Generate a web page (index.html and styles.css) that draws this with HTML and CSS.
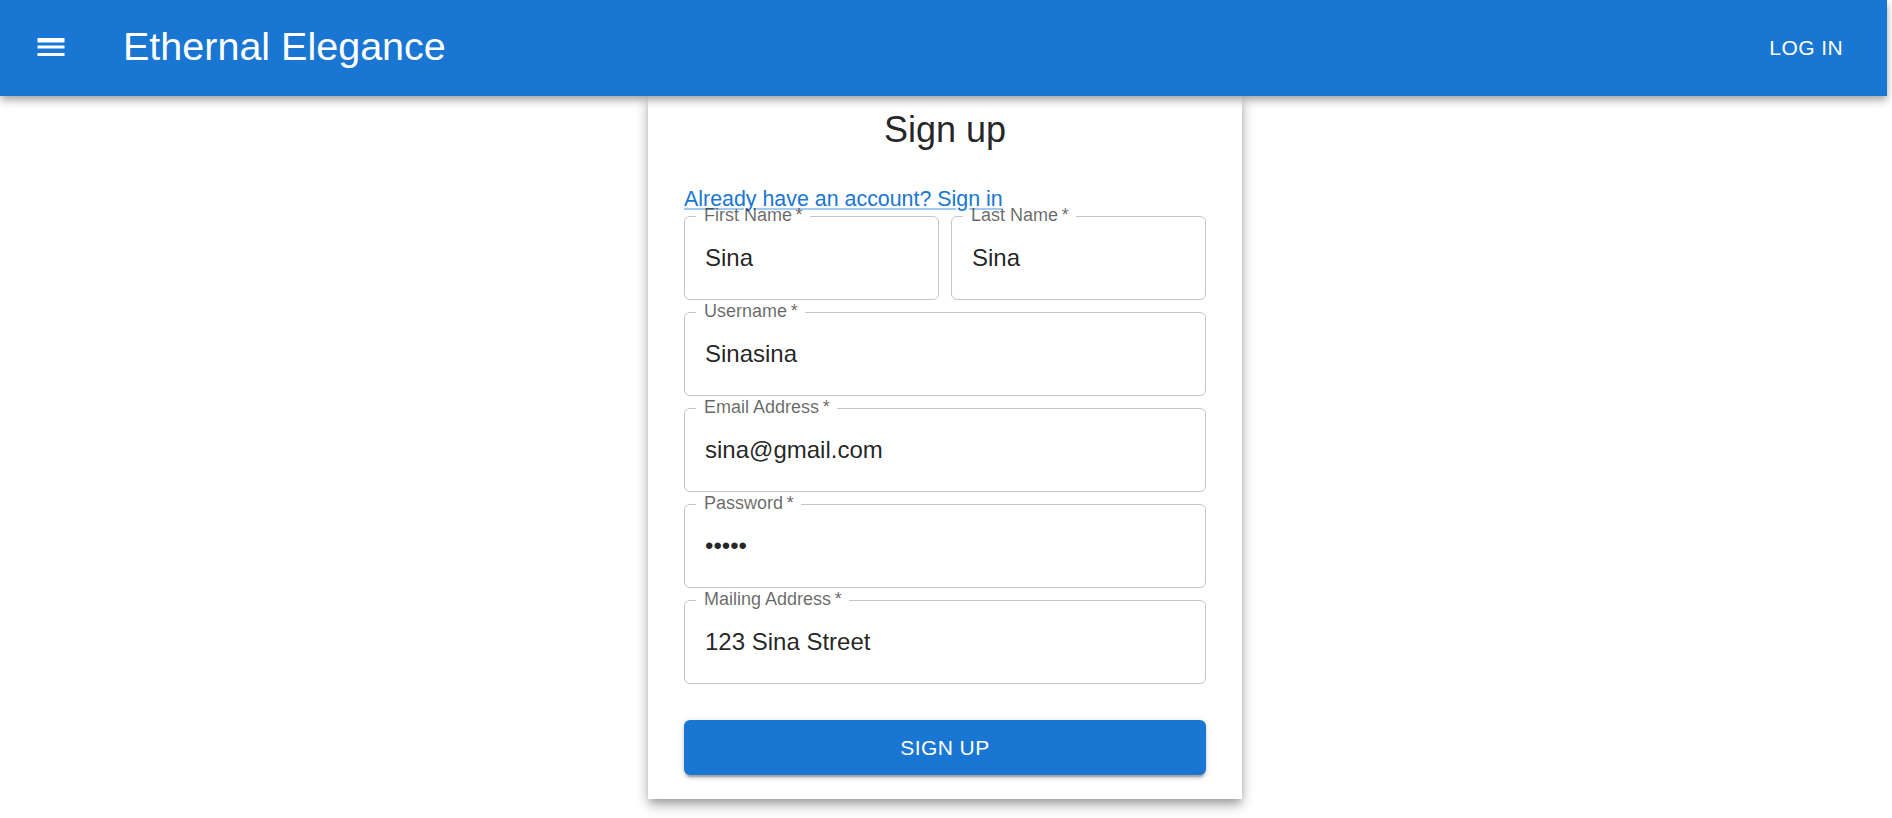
FILE: index.html
```html
<!DOCTYPE html>
<html lang="en">
<head>
<meta charset="utf-8">
<title>Sign up - Ethernal Elegance</title>
<link rel="stylesheet" href="styles.css">
</head>
<body>
<header class="appbar">
  <div class="toolbar">
    <button class="menu-btn" type="button" aria-label="menu">
      <svg viewBox="0 0 24 24" width="36" height="36" aria-hidden="true"><path d="M3 18h18v-2H3v2zm0-5h18v-2H3v2zm0-6v2h18V6H3z" fill="#fff"/></svg>
    </button>
    <h1 class="brand">Ethernal Elegance</h1>
    <span class="spacer"></span>
    <button class="login" type="button">LOG IN</button>
  </div>
</header>
<main class="page">
  <section class="card">
    <h2 class="title">Sign up</h2>
    <a class="signin-link" href="#">Already have an account? Sign in</a>
    <form class="form-grid">
      <fieldset class="field"><legend>First Name&thinsp;*</legend><input type="text" value="Sina"></fieldset>
      <fieldset class="field"><legend>Last Name&thinsp;*</legend><input type="text" value="Sina"></fieldset>
      <fieldset class="field wide"><legend>Username&thinsp;*</legend><input type="text" value="Sinasina"></fieldset>
      <fieldset class="field wide"><legend>Email Address&thinsp;*</legend><input type="email" value="sina@gmail.com"></fieldset>
      <fieldset class="field wide"><legend>Password&thinsp;*</legend><input type="password" value="sina1"></fieldset>
      <fieldset class="field wide"><legend>Mailing Address&thinsp;*</legend><input type="text" value="123 Sina Street"></fieldset>
      <button class="submit wide" type="button">SIGN UP</button>
    </form>
  </section>
</main>
</body>
</html>
```

FILE: styles.css
```css
* { box-sizing: border-box; }

html, body {
  margin: 0;
  padding: 0;
  background: #fff;
  font-family: "Liberation Sans", Arial, sans-serif;
  color: rgba(0, 0, 0, 0.87);
}

.appbar {
  position: relative;
  z-index: 10;
  margin-right: 5px;
  height: 96px;
  background: #1976d2;
  color: #fff;
  box-shadow: 0 3px 6px -1.5px rgba(0,0,0,0.2), 0 6px 7.5px 0 rgba(0,0,0,0.14), 0 1.5px 15px 0 rgba(0,0,0,0.12);
}

.toolbar {
  height: 100%;
  display: flex;
  align-items: center;
  padding: 0 32px 0 33px;
}

.menu-btn {
  display: flex;
  align-items: center;
  justify-content: center;
  width: 36px;
  height: 36px;
  padding: 0;
  margin: -2px 54px 0 0;
  border: 0;
  background: transparent;
  cursor: pointer;
}

.menu-btn svg { display: block; }

.brand {
  margin: -2px 0 0 0;
  font-size: 39.5px;
  line-height: 1;
  font-weight: 400;
  letter-spacing: 0;
  white-space: nowrap;
}

.spacer { flex: 1; }

.login {
  border: 0;
  background: transparent;
  color: #fff;
  font-family: "Liberation Sans", Arial, sans-serif;
  font-size: 21px;
  letter-spacing: 0.02em;
  line-height: 1;
  padding: 8px 12px;
  margin-top: -1px;
  cursor: pointer;
}

.page {
  display: flex;
  justify-content: center;
  align-items: flex-start;
  padding: 0 2px 20px 0;
}

.card {
  width: 594px;
  padding: 9.5px 36px 23.5px;
  background: #fff;
  box-shadow: 0 4.5px 7.5px -1.5px rgba(0,0,0,0.22), 0 7.5px 12px 0 rgba(0,0,0,0.16), 0 1.5px 15px 0 rgba(0,0,0,0.13);
  display: flex;
  flex-direction: column;
}

.title {
  margin: 0;
  text-align: center;
  font-size: 36px;
  line-height: 48px;
  font-weight: 400;
  color: rgba(0, 0, 0, 0.87);
}

.signin-link {
  align-self: flex-start;
  margin-top: 33px;
  font-size: 21.4px;
  line-height: 24px;
  color: #1976d2;
  text-decoration: underline;
  text-decoration-color: rgba(25, 118, 210, 0.4);
}

.form-grid {
  position: relative;
  margin-top: -3px;
  display: grid;
  grid-template-columns: 1fr 1fr;
  column-gap: 12px;
  row-gap: 3.5px;
}

.wide { grid-column: 1 / -1; }

.field {
  margin: 0;
  padding: 0;
  min-width: 0;
  border: 1px solid #c4c4c4;
  border-radius: 6px;
}

.field legend {
  margin-left: 11px;
  padding: 0 7px 4px 8px;
  font-size: 18px;
  line-height: 14px;
  color: rgba(0, 0, 0, 0.6);
  white-space: nowrap;
}

.field input {
  display: block;
  width: 100%;
  height: 73.5px;
  padding: 0 20px 8px;
  border: 0;
  outline: 0;
  background: transparent;
  font-family: "Liberation Sans", Arial, sans-serif;
  font-size: 24px;
  color: rgba(0, 0, 0, 0.87);
}

.submit {
  margin-top: 32.5px;
  height: 55px;
  border: 0;
  border-radius: 6px;
  background: #1976d2;
  color: #fff;
  font-family: "Liberation Sans", Arial, sans-serif;
  font-size: 21px;
  letter-spacing: 0.02em;
  box-shadow: 0 4.5px 1.5px -3px rgba(0,0,0,0.2), 0 3px 3px 0 rgba(0,0,0,0.14), 0 1.5px 7.5px 0 rgba(0,0,0,0.12);
  cursor: pointer;
}
```
